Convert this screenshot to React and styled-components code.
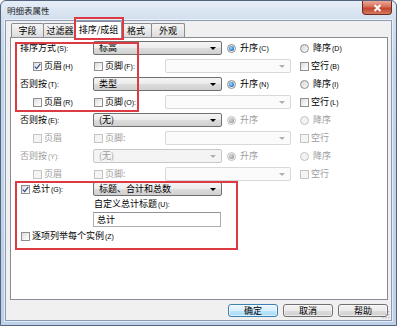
import styled, { createGlobalStyle } from "styled-components";

const GlobalStyle = createGlobalStyle`
  html, body {
    margin: 0;
    padding: 0;
    background: #ffffff;
  }
  body {
    font-family: "Noto Sans CJK SC", "Liberation Sans", sans-serif;
    font-size: 9px;
    line-height: 12px;
    color: #000;
  }
`;

const tabs = [
  { label: "字段", width: 33 },
  { label: "过滤器", width: 34 },
  { label: "排序/成组", width: 47, active: true },
  { label: "格式", width: 32 },
  { label: "外观", width: 34 },
];

const groups = [
  {
    label: "排序方式",
    key: "(S):",
    value: "标高",
    asc: "(C)",
    desc: "(D)",
    header: "(H)",
    footer: "(F):",
    blank: "(B)",
    headerChecked: true,
  },
  {
    label: "否则按",
    key: "(T):",
    value: "类型",
    asc: "(N)",
    desc: "(I)",
    header: "(R)",
    footer: "(O):",
    blank: "(L)",
  },
  {
    label: "否则按",
    key: "(E):",
    value: "(无)",
    subDisabled: true,
  },
  {
    label: "否则按",
    key: "(Y):",
    value: "(无)",
    disabled: true,
    subDisabled: true,
  },
];

const Check = ({ checked, disabled }) => (
  <CheckBox $disabled={disabled}>
    {checked && (
      <svg width="7" height="7" viewBox="0 0 7 7">
        <path d="M0.8 3.6 L2.7 5.6 L6.3 0.8" fill="none" stroke="#3b4f8e" strokeWidth="1.3" />
      </svg>
    )}
  </CheckBox>
);

const Select = ({ width, value, disabled, edit }) => (
  <Dropdown $w={width} $disabled={disabled} $edit={edit}>
    <span>{value}</span>
    <Arrow $disabled={disabled || edit} />
  </Dropdown>
);

const App = () => {
  return (
    <>
      <GlobalStyle />
      <Window>
        <TitleBar>
          <Title>明细表属性</Title>
          <CloseButton>
            <svg width="9" height="8" viewBox="0 0 9 8">
              <path d="M1.5 1 L7.5 7 M7.5 1 L1.5 7" stroke="#ffffff" strokeWidth="1.8" />
            </svg>
          </CloseButton>
        </TitleBar>
        <Client>
          <TabStrip>
            {tabs.map((t) => (
              <Tab key={t.label} $w={t.width} $active={t.active}>
                {t.label}
              </Tab>
            ))}
          </TabStrip>
          <Panel>
            {groups.map((g, i) => (
              <div key={i}>
                <MainRow>
                  <Text $disabled={g.disabled}>
                    {g.label}
                    <Key>{g.key}</Key>
                  </Text>
                  <Select width={129} value={g.value} disabled={g.disabled} />
                  <Option $disabled={g.subDisabled}>
                    <Radio $checked $disabled={g.subDisabled} />
                    <Text $disabled={g.subDisabled}>
                      升序{g.asc && <Key>{g.asc}</Key>}
                    </Text>
                  </Option>
                  <Option>
                    <Radio $disabled={g.subDisabled} />
                    <Text $disabled={g.subDisabled}>
                      降序{g.desc && <Key>{g.desc}</Key>}
                    </Text>
                  </Option>
                </MainRow>
                <SubRow>
                  <Option $indent={13}>
                    <Check checked={g.headerChecked} disabled={g.subDisabled} />
                    <Text $disabled={g.subDisabled}>
                      页眉{g.header && <Key>{g.header}</Key>}
                    </Text>
                  </Option>
                  <Option $indent={1}>
                    <Check disabled={g.subDisabled} />
                    <Text $disabled={g.subDisabled}>
                      页脚{g.footer ? <Key>{g.footer}</Key> : ":"}
                    </Text>
                  </Option>
                  <Select width={126} value="" edit />
                  <span />
                  <Option>
                    <Check disabled={g.subDisabled} />
                    <Text $disabled={g.subDisabled}>
                      空行{g.blank && <Key>{g.blank}</Key>}
                    </Text>
                  </Option>
                </SubRow>
              </div>
            ))}

            <TotalRow>
              <Option $indent={1}>
                <Check checked />
                <Text>
                  总计<Key>(G):</Key>
                </Text>
              </Option>
              <Select width={129} value="标题、合计和总数" />
            </TotalRow>
            <CaptionRow>
              <Text>
                自定义总计标题<Key>(U):</Key>
              </Text>
            </CaptionRow>
            <InputRow>
              <TextInput>总计</TextInput>
            </InputRow>
            <EnumRow>
              <Option $indent={1}>
                <Check />
                <Text>
                  逐项列举每个实例<Key>(Z)</Key>
                </Text>
              </Option>
            </EnumRow>
          </Panel>
          <ButtonRow>
            <Button $default>确定</Button>
            <Button>取消</Button>
            <Button>帮助</Button>
          </ButtonRow>
          <Grip>
            <svg width="8" height="8" viewBox="0 0 8 8">
              <g fill="#b8bcc2">
                <rect x="6" y="0" width="1.4" height="1.4" />
                <rect x="3" y="3" width="1.4" height="1.4" />
                <rect x="6" y="3" width="1.4" height="1.4" />
                <rect x="0" y="6" width="1.4" height="1.4" />
                <rect x="3" y="6" width="1.4" height="1.4" />
                <rect x="6" y="6" width="1.4" height="1.4" />
              </g>
            </svg>
          </Grip>
        </Client>

        <Highlight style={{ left: 73, top: 16, width: 50, height: 23 }} />
        <Highlight style={{ left: 14, top: 41, width: 124, height: 70 }} />
        <Highlight style={{ left: 14, top: 180, width: 223, height: 69 }} />
      </Window>
    </>
  );
};

export default App;

const Window = styled.div`
  position: relative;
  width: 397px;
  height: 326px;
  box-sizing: border-box;
  border: 1px solid #53647c;
  border-radius: 6px 6px 0 0;
  background: linear-gradient(180deg, #e6eef7 0px, #d2dfee 18px, #c3d5ea 60px, #bed1e8 100%);
  display: flex;
  flex-direction: column;
  overflow: hidden;
`;

const TitleBar = styled.div`
  height: 19px;
  display: flex;
  justify-content: space-between;
  align-items: flex-start;
  padding: 0 4px 0 6px;
`;

const Title = styled.span`
  margin-top: 4px;
  font-size: 8.5px;
  line-height: 11px;
  color: #1b1b1b;
`;

const CloseButton = styled.div`
  width: 30px;
  height: 14px;
  box-sizing: border-box;
  border: 1px solid #6f2b22;
  border-top: none;
  border-radius: 0 0 4px 4px;
  background: linear-gradient(180deg, #eaa899 0%, #d66e57 45%, #c2432f 55%, #d67a60 100%);
  display: flex;
  align-items: center;
  justify-content: center;
`;

const Client = styled.div`
  position: relative;
  flex: 1;
  margin: 0 4px 4px;
  border: 1px solid #8a9cb6;
  box-shadow: 0 0 0 1px rgba(255, 255, 255, 0.55);
  background: #f0f0f0;
  padding: 0 3px 0 4px;
  display: flex;
  flex-direction: column;
`;

const TabStrip = styled.div`
  position: relative;
  z-index: 1;
  height: 17px;
  margin-bottom: -1px;
  padding-left: 1px;
  display: flex;
  align-items: flex-end;
`;

const Tab = styled.div`
  box-sizing: border-box;
  width: ${(p) => p.$w}px;
  height: ${(p) => (p.$active ? 17 : 14)}px;
  margin-bottom: ${(p) => (p.$active ? 0 : 1)}px;
  margin-left: ${(p) => (p.$active ? -1 : 0)}px;
  margin-right: ${(p) => (p.$active ? -2 : -1)}px;
  position: relative;
  z-index: ${(p) => (p.$active ? 2 : 1)};
  border: 1px solid #898c95;
  border-bottom: none;
  border-radius: 2px 2px 0 0;
  background: ${(p) => (p.$active ? "#ffffff" : "linear-gradient(180deg, #f4f4f4 0%, #e9e9e9 50%, #dcdcdc 100%)")};
  display: flex;
  align-items: center;
  justify-content: center;
  padding-top: ${(p) => (p.$active ? 0 : 1)}px;
  font-size: 9px;
  white-space: nowrap;
`;

const Panel = styled.div`
  height: 263px;
  box-sizing: border-box;
  border: 1px solid #898c95;
  background: #ffffff;
  padding: 1px 0 0 9px;
`;

const MainRow = styled.div`
  display: grid;
  grid-template-columns: 73px 134px 73px 1fr;
  align-items: center;
  height: 18px;
`;

const SubRow = styled.div`
  display: grid;
  grid-template-columns: 73px 72px 126px 9px 1fr;
  align-items: center;
  height: 18px;
`;

const Text = styled.span`
  color: ${(p) => (p.$disabled ? "#9d9d9d" : "#000000")};
  white-space: nowrap;
  font-size: 9px;
  line-height: 12px;
`;

const Key = styled.span`
  font-family: "Liberation Sans", sans-serif;
  font-size: 7px;
  margin-left: 1px;
`;

const Option = styled.div`
  display: flex;
  align-items: center;
  gap: 2px;
  padding-left: ${(p) => p.$indent || 0}px;
`;

const CheckBox = styled.span`
  box-sizing: border-box;
  width: 9px;
  height: 9px;
  flex-shrink: 0;
  border: 1px solid ${(p) => (p.$disabled ? "#c4c4c4" : "#8e8f8f")};
  background: ${(p) => (p.$disabled ? "#f4f4f4" : "linear-gradient(135deg, #dcdcdc 0%, #f7f7f7 70%, #ffffff 100%)")};
  display: flex;
  align-items: center;
  justify-content: center;
`;

const Radio = styled.span`
  box-sizing: border-box;
  width: 9px;
  height: 9px;
  flex-shrink: 0;
  margin-right: 2px;
  border-radius: 50%;
  border: 1px solid ${(p) => (p.$disabled ? "#c2c2c2" : "#8e8f8f")};
  background: ${(p) => (p.$disabled ? "#f2f2f2" : "linear-gradient(135deg, #d6d6d6, #fbfbfb)")};
  display: flex;
  align-items: center;
  justify-content: center;

  &::after {
    content: "";
    display: ${(p) => (p.$checked ? "block" : "none")};
    width: 5px;
    height: 5px;
    border-radius: 50%;
    background: ${(p) =>
      p.$disabled
        ? "radial-gradient(circle at 40% 40%, #e0e0e0, #9a9a9a 70%)"
        : "radial-gradient(circle at 40% 40%, #b4e2ff, #2f86d6 55%, #1b5aa3 100%)"};
  }
`;

const Dropdown = styled.div`
  box-sizing: border-box;
  width: ${(p) => p.$w}px;
  height: 14px;
  display: flex;
  align-items: center;
  justify-content: space-between;
  padding: 0 5px 0 5px;
  border: 1px solid ${(p) => (p.$edit ? "#d6d8da" : p.$disabled ? "#c6c8ca" : "#707070")};
  border-radius: 2px;
  background: ${(p) =>
    p.$edit
      ? "#fbfbfb"
      : p.$disabled
      ? "#f4f4f4"
      : "linear-gradient(180deg, #f4f4f4 0%, #ebebeb 50%, #dddddd 50%, #d0d0d0 100%)"};
  color: ${(p) => (p.$disabled ? "#9d9d9d" : "#000000")};
  font-size: 9px;
  line-height: 12px;
  white-space: nowrap;
`;

const Arrow = styled.span`
  width: 0;
  height: 0;
  border-left: 3px solid transparent;
  border-right: 3px solid transparent;
  border-top: 3px solid ${(p) => (p.$disabled ? "#b0b0b0" : "#000000")};
`;

const TotalRow = styled.div`
  display: grid;
  grid-template-columns: 73px 129px;
  align-items: center;
  height: 14px;
  margin-top: -1px;
`;

const CaptionRow = styled.div`
  height: 16px;
  display: flex;
  align-items: center;
  padding-left: 74px;
`;

const InputRow = styled.div`
  height: 15px;
  padding-left: 73px;
`;

const TextInput = styled.div`
  box-sizing: border-box;
  width: 128px;
  height: 15px;
  border: 1px solid #abadb3;
  border-top-color: #8f9297;
  background: #ffffff;
  padding-left: 3px;
  font-size: 9px;
  line-height: 13px;
`;

const EnumRow = styled.div`
  height: 16px;
  margin-top: 1px;
  display: flex;
  align-items: center;
`;

const ButtonRow = styled.div`
  display: flex;
  justify-content: flex-end;
  gap: 5px;
  margin-top: 4px;
`;

const Button = styled.div`
  box-sizing: border-box;
  width: 50px;
  height: 13px;
  border: 1px solid ${(p) => (p.$default ? "#3c7fb1" : "#707070")};
  border-radius: 3px;
  background: ${(p) =>
    p.$default
      ? "linear-gradient(180deg, #eaf6fd 0%, #d9f0fc 50%, #bee6fd 50%, #a7d9f5 100%)"
      : "linear-gradient(180deg, #f2f2f2 0%, #ebebeb 50%, #dddddd 50%, #cfcfcf 100%)"};
  box-shadow: inset 0 0 0 1px rgba(255, 255, 255, 0.6);
  display: flex;
  align-items: center;
  justify-content: center;
  font-size: 9px;
  line-height: 11px;
`;

const Grip = styled.div`
  position: absolute;
  right: 1px;
  bottom: 1px;
  width: 8px;
  height: 8px;
  display: flex;
`;

const Highlight = styled.div`
  position: absolute;
  box-sizing: border-box;
  border: 2px solid #dc3b43;
  pointer-events: none;
  z-index: 5;
`;
